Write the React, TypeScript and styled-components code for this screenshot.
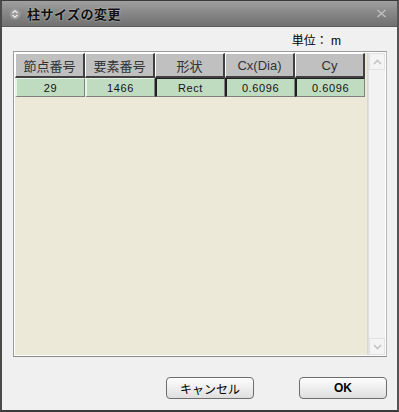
import styled, { createGlobalStyle } from 'styled-components';

const GlobalStyle = createGlobalStyle`
  html, body {
    margin: 0;
    padding: 0;
    background: #f0f0f0;
  }
  * {
    box-sizing: border-box;
  }
`;

const FONT = `"Liberation Sans", "Noto Sans CJK JP", sans-serif`;

const Window = styled.div`
  width: 399px;
  height: 412px;
  display: flex;
  flex-direction: column;
  background: #f0f0f0;
  border: 1px solid #3a3a3a;
  border-left: 2px solid #4a4a4a;
  border-right: 2px solid #555;
  border-bottom: 2px solid #3a3a3a;
  font-family: ${FONT};
  color: #000;
`;

const TitleBar = styled.div`
  height: 26px;
  flex: none;
  display: flex;
  align-items: center;
  padding: 0 10px 0 7px;
  gap: 6px;
  background: linear-gradient(to bottom, #a0a0a0 0%, #888 45%, #717171 100%);
  border-bottom: 1px solid #5c5c5c;
`;

const TitleText = styled.div`
  flex: 1;
  font-size: 13px;
  font-weight: bold;
  color: #111;
  text-shadow: 0 0 2px rgba(255, 255, 255, 0.7);
  letter-spacing: 0.5px;
`;

const Body = styled.div`
  flex: 1;
  display: flex;
  flex-direction: column;
  padding: 0 10px 0 11px;
`;

const UnitRow = styled.div`
  height: 24px;
  display: flex;
  align-items: center;
  justify-content: flex-end;
  padding-right: 46px;
  font-size: 12px;
`;

const Frame = styled.div`
  width: 374px;
  height: 306px;
  display: flex;
  border: 1px solid #9c9c9c;
  border-right-color: #b8b8b8;
  border-bottom-color: #8a8a8a;
  padding: 1px;
  background: #fff;
`;

const GridArea = styled.div`
  flex: 1;
  background: #ece9d8;
  border-right: 1px solid #d8d8d8;
`;

const Row = styled.div`
  display: flex;
`;

const HeaderCell = styled.div`
  width: 70px;
  height: 25px;
  display: flex;
  align-items: center;
  justify-content: center;
  background: #c0c0c0;
  border-top: 1px solid #fff;
  border-left: 1px solid #fff;
  border-right: 2px solid #404040;
  border-bottom: 2px solid #404040;
  font-size: 13px;
  color: #333;
`;

const DataCell = styled.div<{ $edit?: boolean }>`
  width: 70px;
  height: 19px;
  display: flex;
  align-items: center;
  justify-content: center;
  background: #c0dcc0;
  font-size: 11px;
  letter-spacing: 0.6px;
  color: #111;
  border-top: 1px solid ${(p) => (p.$edit ? '#202020' : '#e8f4e8')};
  border-left: 2px solid ${(p) => (p.$edit ? '#202020' : '#e8f4e8')};
  border-right: 1px solid #808080;
  border-bottom: 1px solid #808080;
`;

const ScrollBar = styled.div`
  width: 17px;
  display: flex;
  flex-direction: column;
  justify-content: space-between;
  background: #f2f2f2;
  border-left: 1px solid #e0e0e0;
`;

const ScrollButton = styled.div`
  height: 17px;
  display: flex;
  align-items: center;
  justify-content: center;
  background: #f4f4f4;
  border: 1px solid #e2e2e2;
`;

const Footer = styled.div`
  height: 54px;
  display: flex;
  align-items: flex-start;
  justify-content: flex-end;
  gap: 45px;
  padding: 20px 0 0 0;
`;

const DialogButton = styled.button<{ $primary?: boolean }>`
  width: 88px;
  height: 22px;
  border: 1px solid #6e6e6e;
  border-radius: 4px;
  background: linear-gradient(to bottom, #fdfdfd 0%, #eeeeee 50%, #dedede 100%);
  font-family: ${FONT};
  font-size: 12px;
  font-weight: ${(p) => (p.$primary ? 'bold' : 'normal')};
  color: #000;
  padding: 0;
`;

const Chevron = ({ up, color }: { up: boolean; color: string }) => (
  <svg width="9" height="6" viewBox="0 0 9 6">
    <path
      d={up ? 'M1 5 L4.5 1.5 L8 5' : 'M1 1 L4.5 4.5 L8 1'}
      fill="none"
      stroke={color}
      strokeWidth="1.6"
    />
  </svg>
);

const MenuIcon = () => (
  <svg width="12" height="12" viewBox="0 0 12 12">
    <circle cx="6" cy="6" r="5.5" fill="#9a9a9a" />
    <path d="M3.5 5 L6 2.8 L8.5 5" fill="none" stroke="#f2f2f2" strokeWidth="1.3" />
    <path d="M3.5 7 L6 9.2 L8.5 7" fill="none" stroke="#f2f2f2" strokeWidth="1.3" />
  </svg>
);

const CloseIcon = () => (
  <svg width="11" height="9" viewBox="0 0 11 9">
    <path d="M1.5 1 L9.5 8 M9.5 1 L1.5 8" stroke="#bdbdbd" strokeWidth="1.6" />
  </svg>
);

const headers = ['節点番号', '要素番号', '形状', 'Cx(Dia)', 'Cy'];
const rows = [{ node: '29', elem: '1466', shape: 'Rect', cx: '0.6096', cy: '0.6096' }];

export default function App() {
  return (
    <>
      <GlobalStyle />
      <Window>
        <TitleBar>
          <MenuIcon />
          <TitleText>柱サイズの変更</TitleText>
          <CloseIcon />
        </TitleBar>
        <Body>
          <UnitRow>単位： m</UnitRow>
          <Frame>
            <GridArea>
              <Row>
                {headers.map((h) => (
                  <HeaderCell key={h}>{h}</HeaderCell>
                ))}
              </Row>
              {rows.map((r) => (
                <Row key={r.elem}>
                  <DataCell>{r.node}</DataCell>
                  <DataCell>{r.elem}</DataCell>
                  <DataCell $edit>{r.shape}</DataCell>
                  <DataCell $edit>{r.cx}</DataCell>
                  <DataCell $edit>{r.cy}</DataCell>
                </Row>
              ))}
            </GridArea>
            <ScrollBar>
              <ScrollButton>
                <Chevron up color="#c4c4c4" />
              </ScrollButton>
              <ScrollButton>
                <Chevron up={false} color="#c4c4c4" />
              </ScrollButton>
            </ScrollBar>
          </Frame>
          <Footer>
            <DialogButton>キャンセル</DialogButton>
            <DialogButton $primary>OK</DialogButton>
          </Footer>
        </Body>
      </Window>
    </>
  );
}
